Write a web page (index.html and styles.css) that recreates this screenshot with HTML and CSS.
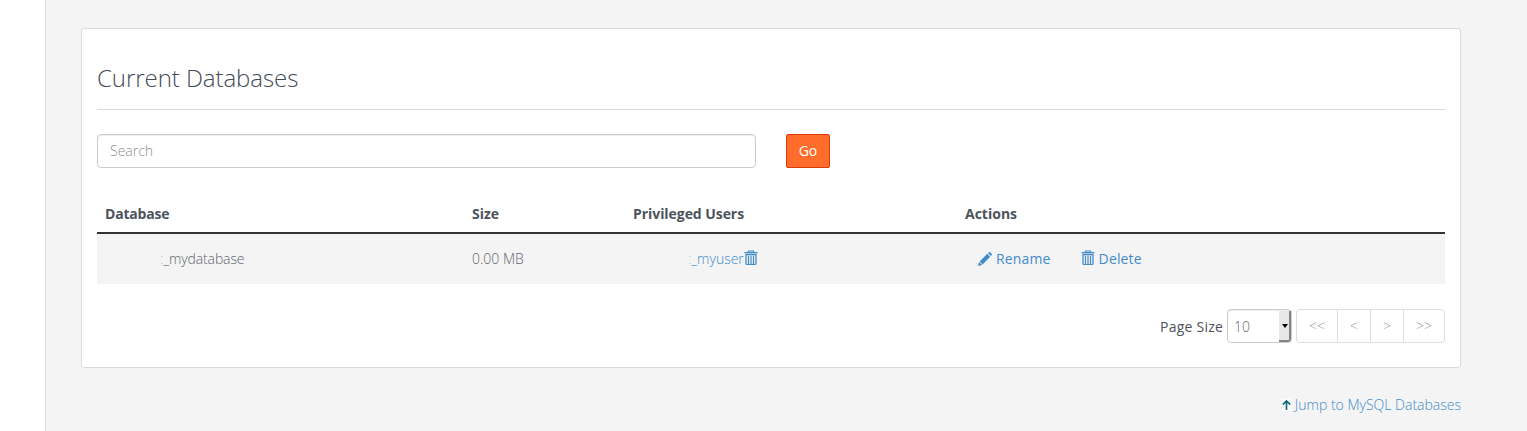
FILE: index.html
```html
<!DOCTYPE html>
<html lang="en">
<head>
<meta charset="utf-8">
<title>MySQL Databases</title>
<link rel="stylesheet" href="styles.css">
</head>
<body>
<svg class="sprite" aria-hidden="true">
  <symbol id="trash" viewBox="0 0 14 16">
    <path fill="none" stroke="currentColor" stroke-width="1.200" d="M4.500 2.500V1h5v1.500"/>
    <path fill="currentColor" d="M.5 2h13v1.400H.5z"/>
    <path fill="none" stroke="currentColor" stroke-width="1.300" d="M2 4.700h10v8.700q0 1-1 1H3q-1 0-1-1z"/>
    <path fill="none" stroke="currentColor" stroke-width="1.200" d="M4.500 5.700v8M7 5.700v8M9.500 5.700v8"/>
  </symbol>
  <symbol id="pencil" viewBox="0 0 14 14">
    <path fill="currentColor" d="M10 1.100 11 .2q.5-.4 1 0l1.800 1.800q.4.500 0 1l-.9 1zM9.300 1.800l2.900 2.900-7.600 7.700-3-3zM1.100 9.900l3 3L0 14z"/>
  </symbol>
</svg>
<div class="layout">
  <div class="sidebar"></div>
  <main class="content">
    <section class="panel">
      <h2 class="title">Current Databases</h2>
      <form class="search">
        <input class="search-field" type="text" placeholder="Search">
        <button class="go" type="button">Go</button>
      </form>
      <div class="table">
        <div class="row head">
          <div class="name-head">Database</div><div>Size</div><div class="users-head">Privileged Users</div><div>Actions</div>
        </div>
        <div class="row item">
          <div class="masked"><span class="colon">:</span><span class="name">_mydatabase</span></div>
          <div>0.00 MB</div>
          <div class="masked link"><span class="colon">:</span><span class="name">_myuser</span><svg class="trash"><use href="#trash"/></svg></div>
          <div class="actions">
            <a class="action"><svg class="pencil"><use href="#pencil"/></svg>Rename</a>
            <a class="action"><svg class="trash"><use href="#trash"/></svg>Delete</a>
          </div>
        </div>
      </div>
      <div class="pager">
        <span class="pager-label">Page Size</span>
        <div class="select"><span class="value">10</span><span class="drop"></span></div>
        <div class="pages"><span>&lt;&lt;</span><span>&lt;</span><span>&gt;</span><span>&gt;&gt;</span></div>
      </div>
    </section>
    <a class="jump link"><svg class="arrow" viewBox="0 0 9 12"><path fill="#fff" d="M0 0h9v12H0z"/><path fill="none" stroke="#136a78" stroke-width="1.700" d="M4.500 11V2M.8 5.700l3.700-3.700 3.700 3.700"/></svg>Jump to MySQL Databases</a>
  </main>
</div>
</body>
</html>
```
FILE: styles.css
```css
* { box-sizing: border-box; }
body {
  margin: 0;
  overflow: hidden;
  background: #f4f4f4;
  color: #5f666e;
  font: 300 14px/20px "Open Sans", sans-serif;
}
.sprite { display: none; }
.layout { display: flex; height: 431px; }
.sidebar {
  width: 46px;
  flex: none;
  background: #fff;
  border-right: 1px solid #d8dddd;
}
.content { width: 1415px; padding: 28px 0 0 35px; }
.panel {
  height: 340px;
  padding: 0 15px;
  background: #fff;
  border: 1px solid #d7dddd;
  border-radius: 3px;
}
.title {
  height: 81px;
  margin: 0 0 24px;
  padding-top: 32px;
  border-bottom: 1px solid #d3dbdb;
  color: #434b57;
  font-size: 24px;
  font-weight: 300;
  letter-spacing: -.06px;
  line-height: 34px;
}
.search { display: flex; gap: 30px; }
.search-field {
  width: 659px;
  height: 34px;
  padding: 5px 12px 7px;
  border: 1px solid #ccc;
  border-radius: 4px;
  box-shadow: inset 0 1px 1px rgba(0, 0, 0, .075);
  font: inherit;
}
.search-field::placeholder { color: #8e8e8e; opacity: 1; }
.go {
  width: 44px;
  height: 34px;
  padding: 0;
  background: #ff6c2c;
  border: 1px solid #dc3c06;
  border-radius: 2px;
  color: #fff;
  font: 400 14px/20px "Open Sans", sans-serif;
}
.table { margin-top: 28px; }
.row {
  display: grid;
  grid-template-columns: 367px 161px 332px 1fr;
  padding-left: 8px;
}
.head {
  height: 38px;
  padding-top: 8px;
  border-bottom: 2px solid #333;
  color: #4c535d;
  font-weight: 700;
}
.name-head { letter-spacing: -.2px; }
.users-head { letter-spacing: -.06px; }
.item { height: 50px; align-items: center; background: #f4f4f4; }
.masked { display: flex; align-items: center; padding-left: 55px; }
.masked .name { letter-spacing: -.12px; }
.masked.link .name { letter-spacing: 0; }
.colon { opacity: .35; }
.link { color: #428bca; }
.trash { width: 14px; height: 16px; margin-top: -2px; }
.pencil { width: 14px; height: 14px; margin-top: -1px; }
.actions { display: flex; gap: 30px; padding-left: 13px; }
.action {
  display: flex;
  align-items: center;
  gap: 4px;
  color: #428bca;
  font-weight: 400;
  letter-spacing: .15px;
}
.pager {
  display: flex;
  justify-content: flex-end;
  gap: 4px;
  margin-top: 25px;
}
.pager-label {
  padding-top: 8px;
  color: #4c535d;
  font-weight: 400;
  letter-spacing: .22px;
}
.select {
  display: flex;
  width: 65px;
  height: 34px;
  border: 1px solid #ccc;
  border-radius: 4px;
  box-shadow: inset 0 1px 1px rgba(0, 0, 0, .075);
}
.value { flex: 1; padding: 7px 0 0 6px; }
.drop {
  display: flex;
  align-items: center;
  justify-content: center;
  width: 12px;
  margin-top: 1px;
  background: #e8e8e7;
  border-right: 2px solid #858585;
  border-bottom: 2px solid #858585;
  border-bottom-right-radius: 3px;
}
.drop::after {
  content: "";
  margin-left: 2px;
  border: 3px solid transparent;
  border-top: 4px solid #000;
  border-bottom: 0;
}
.pages {
  display: flex;
  height: 34px;
  border: 1px solid #ddd;
  border-radius: 4px;
  color: #999;
}
.pages span { width: 33px; padding-top: 6px; text-align: center; }
.pages span:first-child { width: 40px; }
.pages span:last-child { width: 41px; }
.pages span + span { border-left: 1px solid #ddd; }
.jump {
  display: flex;
  justify-content: flex-end;
  align-items: center;
  gap: 4px;
  margin-top: 27px;
}
.arrow { width: 9px; height: 12px; }
```
